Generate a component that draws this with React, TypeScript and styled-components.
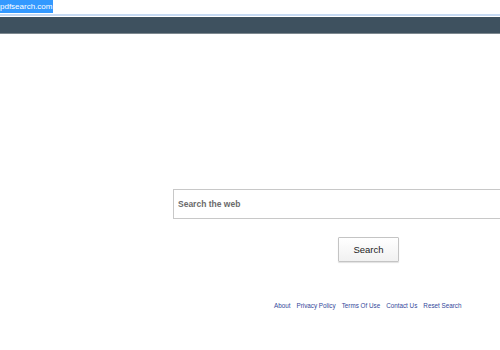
import React from 'react';
import styled, { createGlobalStyle } from 'styled-components';

const GlobalStyle = createGlobalStyle`
  html, body {
    margin: 0;
    padding: 0;
    background: #ffffff;
    font-family: "Liberation Sans", Arial, sans-serif;
    overflow: hidden;
  }
`;

const Page = styled.div`
  width: 500px;
  height: 350px;
  display: flex;
  flex-direction: column;
`;

const AddressRow = styled.div`
  height: 14px;
  display: flex;
  align-items: flex-start;
  border-bottom: 2px solid #c6daf3;
`;

const Selected = styled.span`
  background: #3399ff;
  color: #ffffff;
  font-size: 8px;
  line-height: 13px;
  height: 13px;
  padding-right: 1px;
`;

const TopBar = styled.div`
  margin-top: 1px;
  height: 16px;
  background: #3e515f;
  border-bottom: 1px solid #7d888f;
`;

const Main = styled.div`
  flex: 1;
  display: flex;
  flex-direction: column;
  padding-top: 155px;
  padding-left: 173px;
`;

const SearchInput = styled.input`
  box-sizing: border-box;
  width: 340px;
  height: 30px;
  border: 1px solid #c8c8c8;
  border-radius: 0;
  padding: 0 0 0 4px;
  font-family: "Liberation Sans", Arial, sans-serif;
  font-size: 8.5px;
  font-weight: bold;
  color: #555;
  outline: none;

  &::placeholder {
    color: #6b6b6b;
  }
`;

const ButtonRow = styled.div`
  display: flex;
  padding-left: 165px;
  margin-top: 18px;
`;

const SearchButton = styled.button`
  box-sizing: border-box;
  width: 61px;
  height: 25px;
  background: linear-gradient(#ffffff, #f1f1f1);
  border: 1px solid #c4c4c4;
  border-radius: 1px;
  box-shadow: 0 1px 1px rgba(0, 0, 0, 0.12);
  font-family: "Liberation Sans", Arial, sans-serif;
  font-size: 9.5px;
  color: #222;
  padding: 0;
`;

const Footer = styled.nav`
  display: flex;
  gap: 6px;
  padding-left: 101px;
  margin-top: 40px;
`;

const FooterLink = styled.a`
  font-size: 6.3px;
  color: #33479a;
  text-decoration: none;
`;

const links = ['About', 'Privacy Policy', 'Terms Of Use', 'Contact Us', 'Reset Search'];

export default function App() {
  return (
    <Page>
      <GlobalStyle />
      <AddressRow>
        <Selected>pdfsearch.com</Selected>
      </AddressRow>
      <TopBar />
      <Main>
        <SearchInput placeholder="Search the web" />
        <ButtonRow>
          <SearchButton>Search</SearchButton>
        </ButtonRow>
        <Footer>
          {links.map((l) => (
            <FooterLink key={l} href="#">
              {l}
            </FooterLink>
          ))}
        </Footer>
      </Main>
    </Page>
  );
}
